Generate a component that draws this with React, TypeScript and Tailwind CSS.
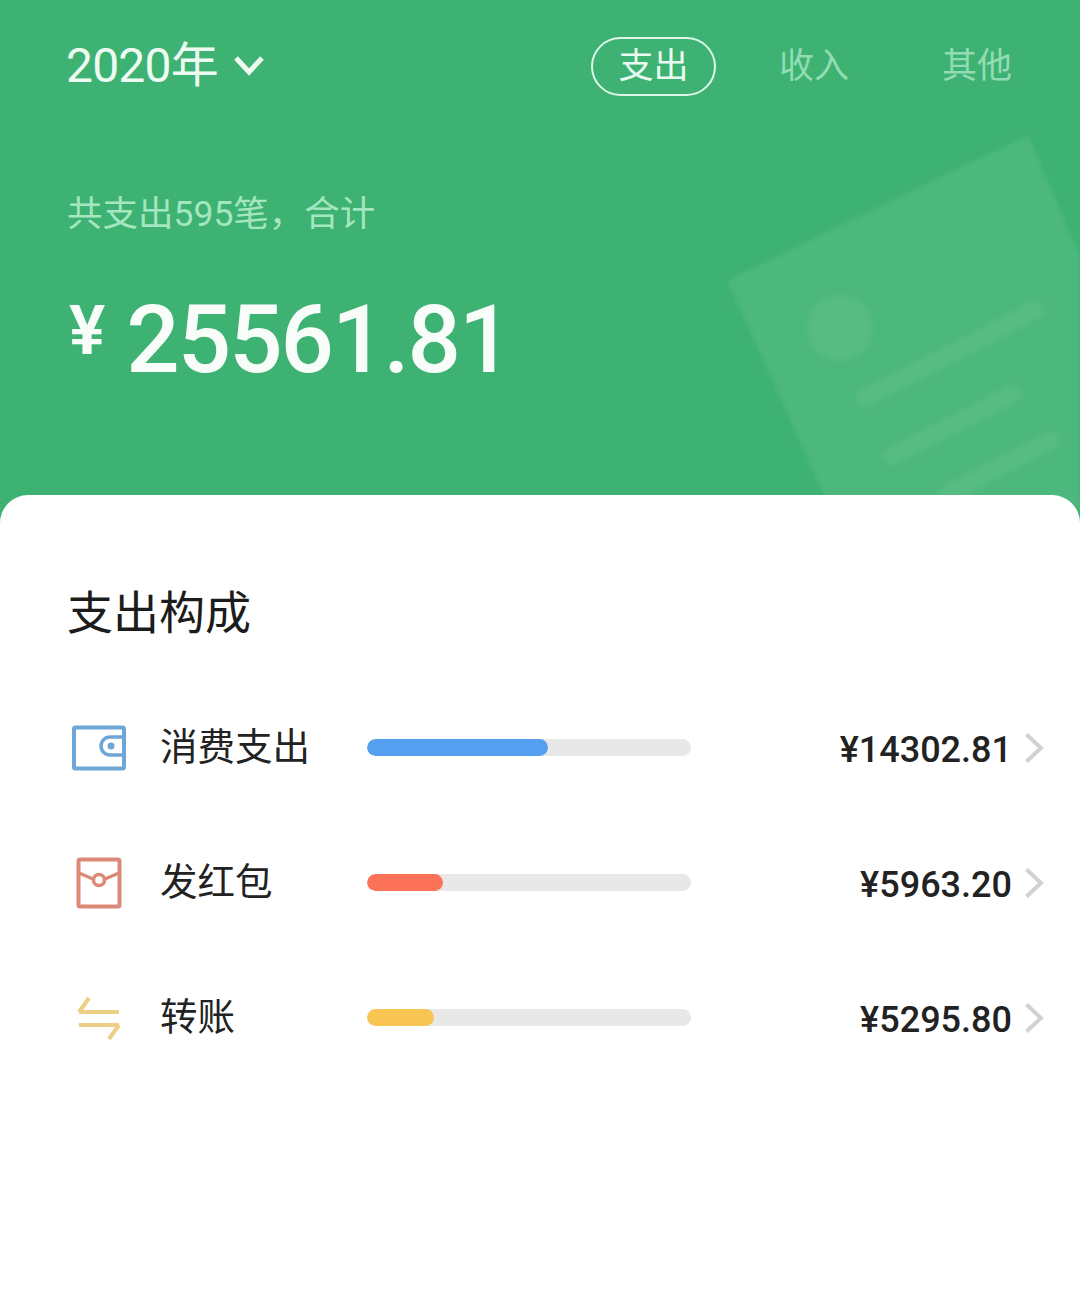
import React from 'react';

const CJK = "font-['Roboto','Noto_Sans_CJK_SC',sans-serif]";

const WalletIcon = () => (
  <svg width="56" height="48" viewBox="0 0 56 48" fill="none">
    <rect x="3" y="3.5" width="50" height="41" rx="1.5" stroke="#6ea6d8" strokeWidth="4" />
    <path d="M52 13H39a9 9 0 0 0 0 18h13" stroke="#6ea6d8" strokeWidth="3.5" />
    <circle cx="40" cy="22" r="3.5" fill="#6ea6d8" />
  </svg>
);

const PacketIcon = () => (
  <svg width="46" height="52" viewBox="0 0 46 52" fill="none">
    <rect x="2.5" y="2.5" width="41" height="47" rx="1.5" stroke="#dc8a78" strokeWidth="4" />
    <path d="M3 16l14 6M43 16l-14 6" stroke="#dc8a78" strokeWidth="3.5" />
    <circle cx="23" cy="23" r="5.5" stroke="#dc8a78" strokeWidth="3.5" />
  </svg>
);

const TransferIcon = () => (
  <svg width="44" height="44" viewBox="0 0 44 44" fill="none">
    <path d="M2 16h40M2 16L12 2M42 29H2M42 29L32 43" stroke="#ecce85" strokeWidth="4" />
  </svg>
);

const Chevron = () => (
  <svg width="20" height="32" viewBox="0 0 20 32" fill="none" className="shrink-0">
    <path d="M2.5 2.5L17 16 2.5 29.5" stroke="#d2d2d2" strokeWidth="4" />
  </svg>
);

const rows = [
  { icon: <WalletIcon />, label: '消费支出', amount: '¥14302.81', width: 181, color: 'bg-[#559ff0]' },
  { icon: <PacketIcon />, label: '发红包', amount: '¥5963.20', width: 76, color: 'bg-[#fb7258]' },
  { icon: <TransferIcon />, label: '转账', amount: '¥5295.80', width: 67, color: 'bg-[#f8c552]' },
];

export default function App() {
  return (
    <div className={`${CJK} relative h-[1294px] w-[1080px] overflow-hidden bg-[#3db272]`}>
      {/* faint receipt drawn behind the header */}
      <svg width="360" height="380" viewBox="0 0 360 380" fill="none" className="absolute left-[720px] top-[130px] blur-[2px]">
        <g opacity="0.08">
          <path d="M12 152L306 10l54 126v244H115z" fill="#ffffff" stroke="#ffffff" strokeWidth="8" strokeLinejoin="round" />
        </g>
        <circle cx="120" cy="198" r="33" fill="#ffffff" fillOpacity="0.06" />
        <path d="M145 268l170-88M172 326l120-62M225 366l105-55" stroke="#ffffff" strokeOpacity="0.06" strokeWidth="19" strokeLinecap="round" />
      </svg>

      <div className="relative flex h-[495px] flex-col px-[66px]">
        <div className="flex h-[132px] items-center justify-between pr-[2px]">
          <div className="flex items-center gap-[15px] text-[48px] leading-none text-[#edfbf3]">
            <span className="tracking-[-0.8px]">2020年</span>
            <svg width="32" height="24" viewBox="0 0 32 24" fill="none">
              <path d="M3 4l13 14L29 4" stroke="#edfbf3" strokeWidth="5" />
            </svg>
          </div>
          <div className="flex items-center text-[35px] leading-none">
            <span className="flex h-[59px] w-[125px] items-center justify-center rounded-full border-2 border-[#dff7e9] text-[#e9fbf1]">支出</span>
            <span className="ml-[63px] text-[#93dcb3]">收入</span>
            <span className="ml-[93px] text-[#93dcb3]">其他</span>
          </div>
        </div>
        <p className="ml-[1px] mt-[60px] text-[35.5px] leading-[44px] text-[#a4e6c0]">共支出595笔，合计</p>
        <div className="ml-[3px] mt-[52px] flex items-start font-medium leading-none text-[#f8fdfa]">
          <span className="mt-[9px] text-[68px] font-semibold leading-none">¥</span>
          <span className="ml-[21px] text-[94px] leading-[104px] tracking-[-2px]">25561.81</span>
        </div>
      </div>

      <div className="relative h-[799px] rounded-t-[28px] bg-white pl-[67px] pr-[36px] pt-[92px]">
        <h2 className="text-[46px] font-normal leading-[52px] text-[#1c1c1c]">支出构成</h2>
        <div className="ml-[1px] mt-[41px] flex flex-col">
          {rows.map((row) => (
            <div key={row.label} className="flex h-[135px] items-center">
              <div className="flex w-[62px] justify-center">{row.icon}</div>
              <span className="ml-[30px] w-[207px] text-[37.5px] leading-none text-[#222222]">{row.label}</span>
              <div className="h-[17px] w-[324px] overflow-hidden rounded-full bg-[#e8e8e8]">
                <div className={`h-full rounded-full ${row.color}`} style={{ width: row.width }} />
              </div>
              <span className="ml-auto mt-[4px] text-[36px] font-medium leading-none text-[#222222]">{row.amount}</span>
              <span className="ml-[12px]"><Chevron /></span>
            </div>
          ))}
        </div>
      </div>
    </div>
  );
}
